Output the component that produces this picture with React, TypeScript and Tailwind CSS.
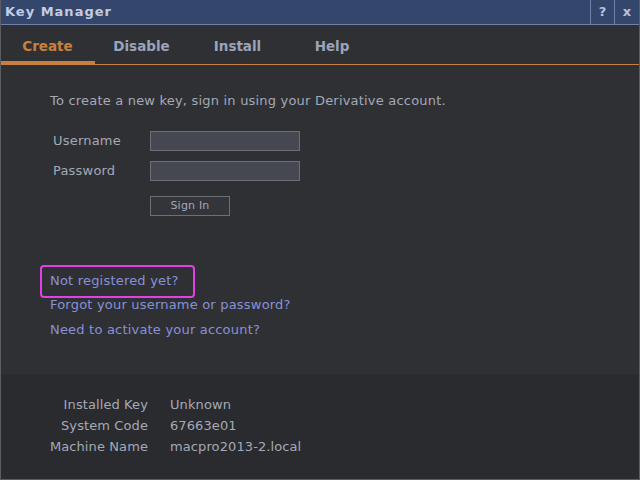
import { FC } from "react";

const font = { fontFamily: '"DejaVu Sans", Verdana, sans-serif' };

const tabs = [
  { name: "Create", w: "w-[95px]" },
  { name: "Disable", w: "w-[93px]" },
  { name: "Install", w: "w-[99px]" },
  { name: "Help", w: "w-[90px]" },
];

const info = [
  { label: "Installed Key", value: "Unknown" },
  { label: "System Code", value: "67663e01" },
  { label: "Machine Name", value: "macpro2013-2.local" },
];

const App: FC = (): JSX.Element => {
  return (
    <div
      className="w-[640px] h-[480px] flex flex-col bg-[#2f3034] border-x border-b border-[#5c5d62] overflow-hidden"
      style={font}
    >
      {/* title bar */}
      <div className="h-[25px] flex bg-[#34466b] border-b border-[#7080a8]">
        <div className="flex-1 pl-[4px] flex items-center text-[13px] font-bold tracking-[1px] text-[#c3cce0]">
          Key Manager
        </div>
        <div className="w-[24px] border-l border-[#7080a8] flex items-center justify-center text-[13px] font-bold text-[#b8c2dc]">
          ?
        </div>
        <div className="w-[25px] border-l border-[#7080a8] flex items-center justify-center text-[13px] font-bold text-[#b8c2dc]">
          x
        </div>
      </div>

      {/* tabs */}
      <div className="h-[40px] flex -ml-px border-b border-[#c8803f]">
        {tabs.map((t, i) => (
          <div key={t.name} className={t.w + " h-full flex flex-col"}>
            <div
              className={
                "flex-1 flex items-center justify-center pt-[7px] text-[13.5px] font-bold " +
                (i === 0 ? "text-[#c8803f]" : "text-[#9aa3ba]")
              }
            >
              {t.name}
            </div>
            <div className={i === 0 ? "h-[3px] bg-[#c8803f]" : "h-[3px]"} />
          </div>
        ))}
      </div>

      {/* content */}
      <div className="flex-1 flex flex-col pl-[49px] pt-[26px] text-[13px] tracking-[0.2px] text-[#a4a9b6]">
        <p>To create a new key, sign in using your Derivative account.</p>

        <div className="mt-[20px] grid grid-cols-[100px_150px] gap-y-[10px] items-center">
          <span className="pl-[3px]">Username</span>
          <div className="h-[20px] bg-[#454850] border border-[#6c6f76]" />
          <span className="pl-[3px]">Password</span>
          <div className="h-[20px] bg-[#454850] border border-[#6c6f76]" />
          <span />
          <button className="mt-[5px] w-[80px] h-[20px] bg-[#33353b] border border-[#6c6f76] text-[11px] text-[#a4a9b6] leading-none">
            Sign In
          </button>
        </div>

        <div className="mt-[49px] flex flex-col items-start text-[#8890d8]">
          <div className="-ml-[10px] pl-[8px] pr-[14px] h-[33px] flex items-center border-[2.5px] border-[#e040e6] rounded-[4px]">
            Not registered yet?
          </div>
          <a className="-mt-[5px] leading-[24px]">Forgot your username or password?</a>
          <a className="leading-[26px]">Need to activate your account?</a>
        </div>
      </div>

      {/* footer */}
      <div className="h-[105px] bg-[#2a2b2f] pt-[20px] flex flex-col text-[13px] tracking-[0.1px] text-[#a4a9b6]">
        {info.map((r) => (
          <div key={r.label} className="flex h-[21px] items-center">
            <span className="w-[147px] text-right">{r.label}</span>
            <span className="ml-[22px]">{r.value}</span>
          </div>
        ))}
      </div>
    </div>
  );
};

export default App;
